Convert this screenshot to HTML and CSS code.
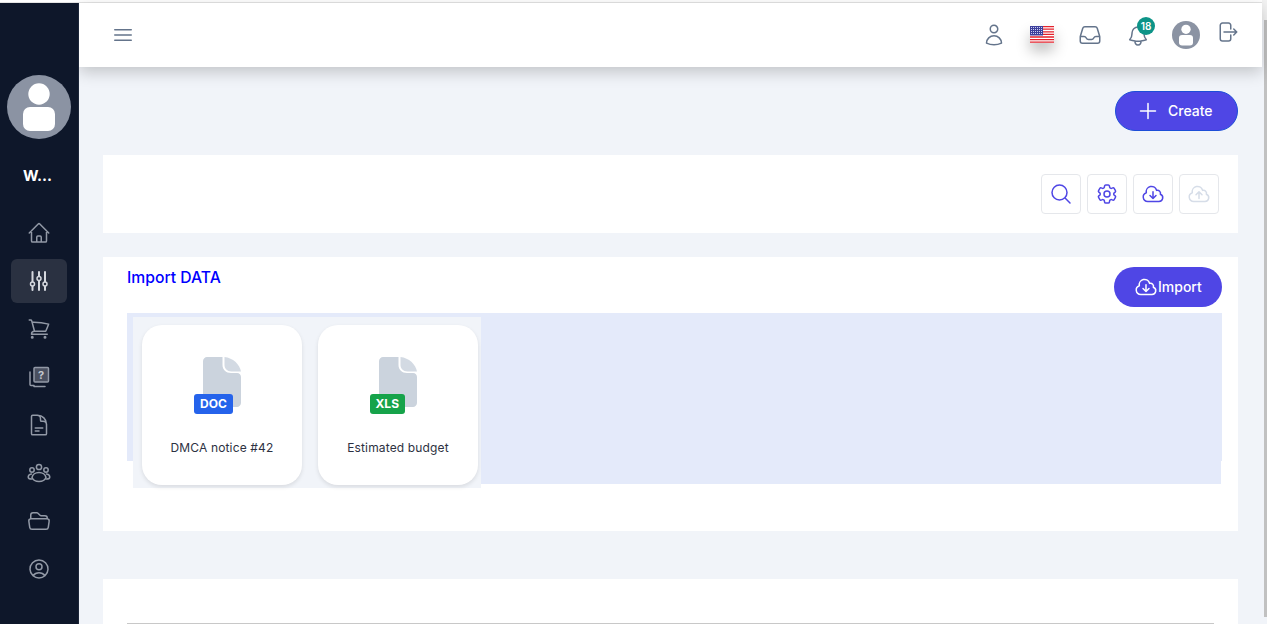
FILE: index.html
```html
<!DOCTYPE html>
<html lang="en">
<head>
    <meta charset="UTF-8">
    <meta name="viewport" content="width=device-width, initial-scale=1.0">
    <title>Import data</title>
    <link rel="stylesheet" href="styles.css">
</head>
<body>
    <div class="topline"></div>
    <div class="app">
        <aside class="sidebar">
            <svg class="side-avatar" viewBox="0 0 64 64">
                <circle cx="32" cy="32" r="32" fill="#8b93a3"/>
                <circle cx="32" cy="19" r="10.7" fill="#fff"/>
                <rect x="16" y="32" width="32" height="24" rx="7" fill="#fff"/>
            </svg>
            <div class="side-name">W...</div>
            <nav class="side-nav">
                <a class="side-item">
                    <svg class="ico" viewBox="0 0 24 24"><path d="M2.25 12l8.954-8.955c.44-.439 1.152-.439 1.591 0L21.75 12M4.5 9.75v10.125c0 .621.504 1.125 1.125 1.125H9.75v-4.875c0-.621.504-1.125 1.125-1.125h2.25c.621 0 1.125.504 1.125 1.125V21h4.125c.621 0 1.125-.504 1.125-1.125V9.75M8.25 21h8.25"/></svg>
                </a>
                <a class="side-item active">
                    <svg class="ico" viewBox="0 0 24 24">
                        <path class="sliders" d="M5.5 3v18M12 3v18M18 3v18"/>
                        <circle class="knob" cx="5.5" cy="15" r="2"/>
                        <circle class="knob" cx="12" cy="9.5" r="2"/>
                        <circle class="knob" cx="18" cy="15" r="2"/>
                    </svg>
                </a>
                <a class="side-item">
                    <svg class="ico" viewBox="0 0 24 24"><path d="M2.25 3h1.386c.51 0 .955.343 1.087.835l.383 1.437M7.5 14.25a3 3 0 00-3 3h15.75m-12.75-3h11.218c1.121-2.3 2.1-4.684 2.924-7.138a60.114 60.114 0 00-16.536-1.84M7.5 14.25L5.106 5.272M6 20.25a.75.75 0 11-1.5 0 .75.75 0 011.5 0zm12.75 0a.75.75 0 11-1.5 0 .75.75 0 011.5 0z"/></svg>
                </a>
                <a class="side-item">
                    <svg class="ico" viewBox="0 0 24 24">
                        <rect class="qbox" x="7" y="2.5" width="14.5" height="14.5" rx="1"/>
                        <path d="M7 20.5H4a1 1 0 01-1-1V7M7 21.5h11"/>
                        <text class="qmark" x="14.2" y="14">?</text>
                    </svg>
                </a>
                <a class="side-item">
                    <svg class="ico" viewBox="0 0 24 24"><path d="M19.5 14.25v-2.625a3.375 3.375 0 00-3.375-3.375h-1.5A1.125 1.125 0 0113.5 7.125v-1.5a3.375 3.375 0 00-3.375-3.375H8.25m0 12.75h7.5m-7.5 3H12M10.5 2.25H5.625c-.621 0-1.125.504-1.125 1.125v17.25c0 .621.504 1.125 1.125 1.125h12.75c.621 0 1.125-.504 1.125-1.125V11.25a9 9 0 00-9-9z"/></svg>
                </a>
                <a class="side-item">
                    <svg class="ico" viewBox="0 0 24 24">
                        <circle cx="12" cy="6" r="2.6"/>
                        <circle cx="5" cy="9" r="2.2"/>
                        <circle cx="19" cy="9" r="2.2"/>
                        <path d="M12 11.5c3.5 0 6.5 2.2 7 5-1 2.500-3.500 4-7 4s-6-1.500-7-4c.5-2.800 3.500-5 7-5z"/>
                        <path d="M4.500 13c-2 .4-3.300 1.700-3.300 3 0 1.200 1.500 2.100 3.500 2.100M19.500 13c2 .4 3.300 1.700 3.300 3 0 1.200-1.500 2.100-3.500 2.100"/>
                    </svg>
                </a>
                <a class="side-item">
                    <svg class="ico" viewBox="0 0 24 24"><path d="M3.75 9.776c.112-.017.227-.026.344-.026h15.812c.117 0 .232.009.344.026m-16.5 0a2.250 2.250 0 00-1.883 2.542l.857 6a2.250 2.250 0 002.227 1.932H19.050a2.250 2.250 0 002.227-1.932l.857-6a2.250 2.250 0 00-1.883-2.542m-16.500 0V6A2.250 2.250 0 016 3.750h3.879a1.500 1.500 0 011.060.440l2.122 2.120a1.500 1.500 0 001.060.440H18A2.250 2.250 0 0120.250 9v.776"/></svg>
                </a>
                <a class="side-item">
                    <svg class="ico" viewBox="0 0 24 24"><path d="M17.982 18.725A7.488 7.488 0 0012 15.750a7.488 7.488 0 00-5.982 2.975m11.963 0a9 9 0 10-11.963 0m11.963 0A8.966 8.966 0 0112 21a8.966 8.966 0 01-5.982-2.275M15 9.750a3 3 0 11-6 0 3 3 0 016 0z"/></svg>
                </a>
            </nav>
        </aside>

        <div class="main">
            <header class="header">
                <svg class="ico menu-btn" viewBox="0 0 24 24"><path d="M3.750 6.750h16.500M3.750 12h16.500m-16.500 5.250h16.500"/></svg>
                <div class="header-tools">
                    <div class="tool">
                        <svg class="ico" viewBox="0 0 24 24"><path d="M15.750 6a3.750 3.750 0 11-7.500 0 3.750 3.750 0 017.500 0zM4.501 20.118a7.500 7.500 0 0114.998 0A17.933 17.933 0 0112 21.750c-2.676 0-5.216-.584-7.499-1.632z"/></svg>
                    </div>
                    <div class="tool">
                        <svg class="flag" viewBox="0 0 24 17">
                            <rect width="24" height="17" fill="#fff"/>
                            <path d="M0 .6h24M0 3.200h24M0 5.800h24M0 8.400h24M0 11h24M0 13.600h24M0 16.200h24" stroke="#e3222c" stroke-width="1.300"/>
                            <rect width="13" height="9.500" fill="#3c3f9c"/>
                            <path d="M1 1.500h11M1 3.500h11M1 5.500h11M1 7.500h11" stroke="#c9cdf0" stroke-width="1" stroke-dasharray="1 1"/>
                        </svg>
                    </div>
                    <div class="tool">
                        <svg class="ico" viewBox="0 0 24 24"><path d="M2.250 13.500h3.860a2.250 2.250 0 012.012 1.244l.256.512a2.250 2.250 0 002.013 1.244h3.218a2.250 2.250 0 002.013-1.244l.256-.512a2.250 2.250 0 012.013-1.244h3.859m-19.500.338V18a2.250 2.250 0 002.250 2.250h15A2.250 2.250 0 0021.750 18v-4.162c0-.224-.034-.447-.1-.661L19.240 5.338a2.250 2.250 0 00-2.150-1.588H6.911a2.250 2.250 0 00-2.150 1.588L2.350 13.177a2.250 2.250 0 00-.1.661z"/></svg>
                    </div>
                    <div class="tool">
                        <svg class="ico bell" viewBox="0 0 24 24"><path d="M14.857 17.082a23.848 23.848 0 005.454-1.310A8.967 8.967 0 0118 9.750v-.7V9A6 6 0 006 9v.750a8.967 8.967 0 01-2.312 6.022c1.733.640 3.560 1.085 5.455 1.310m5.714 0a24.255 24.255 0 01-5.714 0m5.714 0a3 3 0 11-5.714 0"/></svg>
                        <span class="badge">18</span>
                    </div>
                    <div class="tool">
                        <svg class="head-avatar" viewBox="0 0 64 64">
                            <circle cx="32" cy="32" r="32" fill="#8b93a3"/>
                            <circle cx="32" cy="19" r="10.700" fill="#fff"/>
                            <rect x="16" y="32" width="32" height="24" rx="7" fill="#fff"/>
                        </svg>
                    </div>
                    <div class="tool logout">
                        <svg class="ico" viewBox="0 0 24 24"><path d="M15.750 9V5.250A2.250 2.250 0 0013.500 3h-6a2.250 2.250 0 00-2.250 2.250v13.500A2.250 2.250 0 007.500 21h6a2.250 2.250 0 002.250-2.250V15m3 0l3-3m0 0l-3-3m3 3H9"/></svg>
                    </div>
                </div>
            </header>

            <main class="content">
                <div class="page-actions">
                    <button class="btn btn-create">
                        <svg class="ico" viewBox="0 0 24 24"><path d="M12 4.500v15m7.500-7.500h-15"/></svg>
                        Create
                    </button>
                </div>

                <section class="card toolbar">
                    <button class="tool-btn">
                        <svg class="ico" viewBox="0 0 24 24"><path d="M21 21l-5.197-5.197m0 0A7.500 7.500 0 105.196 5.196a7.500 7.500 0 0010.607 10.607z"/></svg>
                    </button>
                    <button class="tool-btn">
                        <svg class="ico" viewBox="0 0 24 24"><path d="M9.594 3.940c.09-.542.56-.94 1.110-.94h2.593c.55 0 1.020.398 1.110.94l.213 1.281c.063.374.313.686.645.870.074.04.147.083.22.127.324.196.72.257 1.075.124l1.217-.456a1.125 1.125 0 011.370.49l1.296 2.247a1.125 1.125 0 01-.26 1.431l-1.003.827c-.293.24-.438.613-.431.992a6.759 6.759 0 010 .255c-.007.378.138.75.43.99l1.005.828c.424.35.534.954.26 1.430l-1.298 2.247a1.125 1.125 0 01-1.369.491l-1.217-.456c-.355-.133-.75-.072-1.076.124a6.570 6.570 0 01-.22.128c-.331.183-.581.495-.644.869l-.213 1.280c-.09.543-.56.941-1.110.941h-2.594c-.55 0-1.020-.398-1.110-.94l-.213-1.281c-.062-.374-.312-.686-.644-.870a6.520 6.520 0 01-.22-.127c-.325-.196-.72-.257-1.076-.124l-1.217.456a1.125 1.125 0 01-1.369-.49l-1.297-2.247a1.125 1.125 0 01.26-1.431l1.004-.827c.292-.24.437-.613.43-.992a6.932 6.932 0 010-.255c.007-.378-.138-.75-.43-.99l-1.004-.828a1.125 1.125 0 01-.26-1.430l1.297-2.247a1.125 1.125 0 011.370-.491l1.216.456c.356.133.751.072 1.076-.124.072-.044.146-.087.22-.128.332-.183.582-.495.644-.869l.214-1.281zM15 12a3 3 0 11-6 0 3 3 0 016 0z"/></svg>
                    </button>
                    <button class="tool-btn">
                        <svg class="ico" viewBox="0 0 24 24"><path d="M12 9.750v6.750m0 0l-3-3m3 3l3-3m-8.250 6a4.500 4.500 0 01-1.410-8.775 5.250 5.250 0 0110.233-2.330 3 3 0 013.758 3.848A3.752 3.752 0 0118 19.500H6.750z"/></svg>
                    </button>
                    <button class="tool-btn disabled">
                        <svg class="ico" viewBox="0 0 24 24"><path d="M12 16.500V9.750m0 0l3 3m-3-3l-3 3M6.750 19.500a4.500 4.500 0 01-1.410-8.775 5.250 5.250 0 0110.233-2.330 3 3 0 013.758 3.848A3.752 3.752 0 0118 19.500H6.750z"/></svg>
                    </button>
                </section>

                <section class="card import-card">
                    <div class="import-head">
                        <h2 class="import-title">Import DATA</h2>
                        <button class="btn btn-import">
                            <svg class="ico" viewBox="0 0 24 24"><path d="M12 9.750v6.750m0 0l-3-3m3 3l3-3m-8.250 6a4.500 4.500 0 01-1.410-8.775 5.250 5.250 0 0110.233-2.330 3 3 0 013.758 3.848A3.752 3.752 0 0118 19.500H6.750z"/></svg>
                            Import
                        </button>
                    </div>
                    <div class="dropzone">
                        <div class="drop-inner">
                            <div class="file-row">
                                <div class="file-card">
                                    <div class="file-icon">
                                        <svg class="doc-shape" viewBox="0 0 38 50">
                                            <path d="M4 0H19.500V8C19.500 12.500 23 16 28 16H34C36.500 16 38 18 38 20V46C38 48 36 50 34 50H4C2 50 0 48 0 46V4C0 2 2 0 4 0Z"/>
                                            <path class="doc-fold" d="M21.500 0C30 1 36.500 7 38 14.500H28.500C24 14.500 21.500 11.500 21.500 8Z"/>
                                        </svg>
                                        <span class="file-type type-doc">DOC</span>
                                    </div>
                                    <div class="file-name">DMCA notice #42</div>
                                </div>
                                <div class="file-card">
                                    <div class="file-icon">
                                        <svg class="doc-shape" viewBox="0 0 38 50">
                                            <path d="M4 0H19.500V8C19.500 12.500 23 16 28 16H34C36.500 16 38 18 38 20V46C38 48 36 50 34 50H4C2 50 0 48 0 46V4C0 2 2 0 4 0Z"/>
                                            <path class="doc-fold" d="M21.500 0C30 1 36.500 7 38 14.500H28.500C24 14.500 21.500 11.500 21.500 8Z"/>
                                        </svg>
                                        <span class="file-type type-xls">XLS</span>
                                    </div>
                                    <div class="file-name">Estimated budget</div>
                                </div>
                            </div>
                        </div>
                    </div>
                </section>

                <section class="card table-card">
                    <div class="table-rule"></div>
                </section>
            </main>
        </div>
    </div>
    <div class="scroll-thumb"></div>
</body>
</html>
```

FILE: styles.css
```css
body {
    margin: 0;
    height: 624px;
    overflow: hidden;
    position: relative;
    font-family: Inter, "Liberation Sans", sans-serif;
    background-color: #fff;
}
.topline {
    height: 2px;
    background-color: #fff;
    border-bottom: 1px solid #e4e4e4;
}
.app {
    display: flex;
    height: 621px;
}

/* sidebar */
.sidebar {
    width: 79px;
    flex: none;
    background-color: #0e172a;
    border-right: 1px solid #1c2639;
    display: flex;
    flex-direction: column;
    align-items: center;
    padding-top: 72px;
    box-sizing: border-box;
    position: relative;
    z-index: 2;
}
.side-avatar {
    width: 64px;
    height: 64px;
}
.side-name {
    margin-top: 27px;
    margin-right: 3px;
    height: 20px;
    line-height: 20px;
    color: #fff;
    font-size: 15px;
    font-weight: 700;
}
.side-nav {
    margin-top: 25px;
    display: flex;
    flex-direction: column;
    gap: 4px;
}
.side-item {
    width: 56px;
    height: 44px;
    display: flex;
    align-items: center;
    justify-content: center;
    border-radius: 6px;
    color: #9299a6;
}
.side-item.active {
    background-color: #2a3141;
    color: #d5d8de;
}
.ico {
    width: 24px;
    height: 24px;
    fill: none;
    stroke: currentColor;
    stroke-width: 1.5;
    stroke-linecap: round;
    stroke-linejoin: round;
}
.sliders {
    stroke-width: 2;
}
.knob {
    fill: #2a3141;
    stroke-width: 1.5;
}
.qbox {
    fill: #4a5060;
}
.qmark {
    fill: #c4c7ce;
    stroke: none;
    font-size: 11px;
    font-weight: 700;
    text-anchor: middle;
}

/* main area */
.main {
    width: 1183px;
    flex: none;
    background-color: #f1f4f9;
    display: flex;
    flex-direction: column;
}
.header {
    height: 64px;
    flex: none;
    background-color: #fff;
    box-shadow: 0 5px 15px rgba(0, 0, 0, 0.2);
    display: flex;
    align-items: center;
    justify-content: space-between;
    padding: 0 16px 0 32px;
    position: relative;
    z-index: 1;
}
.menu-btn {
    color: #64748b;
}
.header-tools {
    display: flex;
    align-items: center;
}
.tool {
    width: 48px;
    height: 48px;
    display: flex;
    align-items: center;
    justify-content: center;
    position: relative;
    color: #64748b;
}
.tool.logout {
    width: 36px;
    box-sizing: border-box;
    padding-right: 3px;
    margin-bottom: 6px;
}
.flag {
    width: 24px;
    height: 17px;
    margin-bottom: 1px;
    box-shadow: 0 8px 14px rgba(0, 0, 0, 0.25);
}
.bell {
    margin-top: 2px;
}
.badge {
    position: absolute;
    top: 6px;
    left: 23px;
    width: 18px;
    height: 18px;
    border-radius: 50%;
    background-color: #0d9488;
    color: #fff;
    font-size: 10px;
    font-weight: 600;
    line-height: 18px;
    text-align: center;
}
.head-avatar {
    width: 28px;
    height: 28px;
}

/* content */
.content {
    padding: 24px 24px 0;
    flex: 1;
    min-height: 0;
}
.page-actions {
    display: flex;
    justify-content: flex-end;
    margin-bottom: 24px;
}
.btn {
    height: 40px;
    border-radius: 20px;
    background-color: #4f46e5;
    color: #fff;
    font-family: inherit;
    font-size: 14px;
    font-weight: 500;
    line-height: 18px;
    display: flex;
    align-items: center;
    border: none;
    cursor: pointer;
}
.btn-create {
    width: 123px;
    border: 1px solid #1d4ed8;
    padding: 0 0 1px 20px;
    gap: 8px;
}
.card {
    background-color: #fff;
}
.toolbar {
    height: 78px;
    box-sizing: border-box;
    padding: 19px 19px 0 0;
    display: flex;
    justify-content: flex-end;
    gap: 6px;
    margin-bottom: 24px;
}
.tool-btn {
    width: 40px;
    height: 40px;
    padding: 0;
    background: #fff;
    border: 1px solid #e5e7eb;
    border-radius: 4px;
    color: #4f46e5;
    display: flex;
    align-items: center;
    justify-content: center;
}
.tool-btn.disabled {
    color: #d6dde8;
}
.import-card {
    height: 274px;
    box-sizing: border-box;
    padding: 10px 16px 0 24px;
    margin-bottom: 48px;
}
.import-head {
    height: 46px;
    display: flex;
    justify-content: space-between;
}
.import-title {
    margin: 0;
    color: #0000ff;
    font-size: 15.7px;
    font-weight: 500;
    line-height: 22px;
}
.btn-import {
    width: 108px;
    padding: 0 0 1px 20px;
    justify-content: flex-start;
}
.dropzone {
    height: 148px;
    background-color: #e4eafa;
    padding: 4px 0 0 6px;
    box-sizing: border-box;
}
.drop-inner {
    width: 1088px;
    height: 167px;
    background-color: #e4eafa;
}
.file-row {
    width: 348px;
    height: 171px;
    box-sizing: border-box;
    background-color: #f1f4f9;
    padding: 8px 3px 3px 9px;
    display: flex;
    gap: 16px;
}
.file-card {
    width: 160px;
    height: 160px;
    box-sizing: border-box;
    background-color: #fff;
    border-radius: 20px;
    box-shadow: 0 2px 4px rgba(0, 0, 0, 0.1);
    padding-top: 32px;
    display: flex;
    flex-direction: column;
    align-items: center;
}
.file-icon {
    width: 38px;
    height: 50px;
    position: relative;
}
.doc-shape {
    width: 38px;
    height: 50px;
    fill: #cbd3dd;
    display: block;
}
.doc-fold {
    fill: #d3dae3;
}
.file-type {
    position: absolute;
    left: -9px;
    top: 37px;
    height: 20px;
    padding: 0 6px;
    border-radius: 3px;
    color: #fff;
    font-size: 12px;
    font-weight: 700;
    line-height: 20px;
}
.type-doc {
    background-color: #2563eb;
}
.type-xls {
    background-color: #16a34a;
    padding: 0 5.5px;
}
.file-name {
    margin-top: 32px;
    color: #2d3142;
    font-size: 12px;
    line-height: 18px;
    letter-spacing: 0.15px;
}
.table-card {
    height: 45px;
    padding: 44px 24px 0;
    box-sizing: border-box;
}
.table-rule {
    height: 1px;
    background-color: #c8c8c8;
}

.scroll-thumb {
    position: absolute;
    top: 0;
    right: 0;
    width: 5px;
    height: 624px;
    background: linear-gradient(#f3f3f3 20px, #f1f4f9 20px);
}
.scroll-thumb::after {
    content: "";
    position: absolute;
    top: 20px;
    right: 0;
    width: 3px;
    height: 597px;
    background-color: #c1c1c1;
}
```
